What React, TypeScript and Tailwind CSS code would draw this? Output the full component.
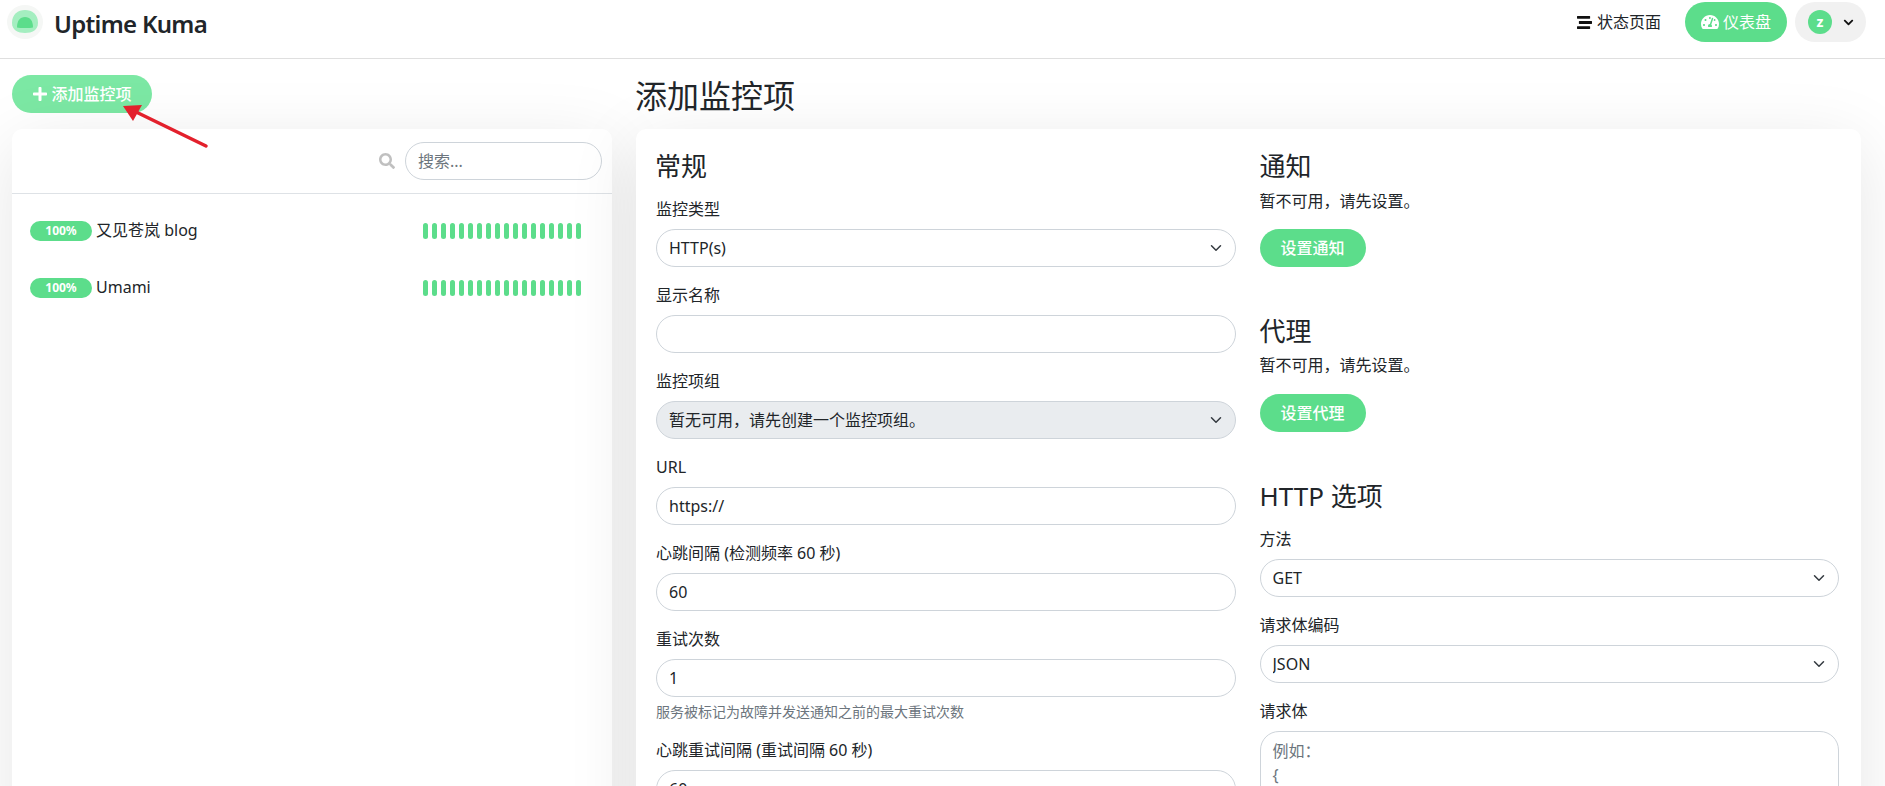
import React from "react";
import { FaPlus, FaSearch, FaStream, FaTachometerAlt, FaChevronDown } from "react-icons/fa";

const font = "font-['Noto_Sans','Noto_Sans_CJK_SC',sans-serif]";

function Field({ label, children, hint }: { label: string; children: React.ReactNode; hint?: string }) {
  return (
    <div className="mb-4">
      <label className="block h-6 mb-2 text-base leading-6 text-[#212529]">{label}</label>
      {children}
      {hint && <div className="mt-1 text-sm leading-[21px] text-[#6c757d]">{hint}</div>}
    </div>
  );
}

function TextInput({ value = "" }: { value?: string }) {
  return (
    <input
      readOnly
      value={value}
      className="block w-full h-[38px] px-3 rounded-full border border-[#ced4da] bg-white text-base text-[#212529] outline-none"
    />
  );
}

function SelectBox({ value, disabled }: { value: string; disabled?: boolean }) {
  return (
    <div className="relative">
      <select
        disabled={disabled}
        defaultValue={value}
        className={`block w-full h-[38px] pl-3 pr-9 rounded-full border border-[#ced4da] appearance-none text-base text-[#212529] opacity-100 outline-none ${disabled ? "bg-[#e9ecef]" : "bg-white"}`}
      >
        <option>{value}</option>
      </select>
      <svg className="absolute right-3 top-[13px] w-4 h-3 pointer-events-none" viewBox="0 0 16 16" fill="none">
        <path d="m2 5 6 6 6-6" stroke="#343a40" strokeWidth="2" strokeLinecap="round" strokeLinejoin="round" />
      </svg>
    </div>
  );
}

function GreenButton({ children }: { children: React.ReactNode }) {
  return (
    <button className="block h-[38px] w-[106px] rounded-full bg-[#5cdd8b] text-base font-medium text-white">{children}</button>
  );
}

function Monitor({ name }: { name: string }) {
  return (
    <div className="flex items-center h-[57px] pl-[18px] pr-[31px]">
      <span className="flex items-center justify-center w-[62px] h-5 rounded-full bg-[#5cdd8b] text-xs font-bold text-white">
        100%
      </span>
      <span className="ml-1 -mt-[2px] text-base text-[#212529]">{name}</span>
      <div className="ml-auto flex gap-1">
        {Array.from({ length: 18 }).map((_, i) => (
          <span key={i} className="block w-[5px] h-4 rounded-full bg-[#5cdd8b]" />
        ))}
      </div>
    </div>
  );
}

export default function App() {
  return (
    <div className={`relative h-screen overflow-hidden bg-white text-[#212529] ${font}`}>
      <header className="flex items-center h-[59px] border-b border-[#dfdfdf] bg-white pb-[16px] pl-[7px] pr-[19px]">
        <svg className="w-9 h-[34px] mt-[2px]" viewBox="0 0 36 34">
          <ellipse cx="18" cy="17" rx="18" ry="17" fill="#f5f7f5" />
          <path d="M5 18C5 9 11 5 18 5s13 4 13 13c0 7-6 10-13 10S5 25 5 18Z" fill="#a4eec0" />
          <path d="M10 22.500c0-7 3-10.500 8-10.500s8 3.500 8 10.500c-3 .8-13 .8-16 0Z" fill="#5cdd8b" />
        </svg>
        <span className="ml-[11px] mt-[5px] text-2xl font-semibold tracking-[-0.7px] text-[#212529]">Uptime Kuma</span>
        <div className="ml-auto flex items-center mt-[2px]">
          <FaStream className="w-[15px] h-[15px] text-[#111]" />
          <span className="ml-[5px] text-base">状态页面</span>
          <button className="ml-6 flex items-center justify-center gap-1 w-[102px] h-10 rounded-full bg-[#5cdd8b] text-base text-white">
            <FaTachometerAlt className="w-[18px] h-[18px]" />
            仪表盘
          </button>
          <div className="ml-2 flex items-center w-[71px] h-10 rounded-full bg-[#f1f1f1] pl-[13px]">
            <span className="flex items-center justify-center w-6 h-6 rounded-full bg-[#5cdd8b] text-sm font-bold text-white">
              z
            </span>
            <FaChevronDown className="ml-[11px] w-[11px] h-[11px] text-[#111]" />
          </div>
        </div>
      </header>

      <main className="grid grid-cols-[624px_1237px] gap-0 pt-4">
        <div className="pl-3 pr-3">
          <button className="flex items-center justify-center gap-[3px] w-[140px] h-[38px] rounded-full bg-[#7ce8a4] text-base font-medium text-white">
            <FaPlus className="w-4 h-4" />
            添加监控项
          </button>
          <div className="mt-4 h-[720px] rounded-[10px] bg-white shadow-[0_15px_70px_rgba(0,0,0,0.1)]">
            <div className="flex items-center justify-end h-[65px] pr-[10px] border-b border-[#dee2e6]">
              <FaSearch className="w-4 h-4 text-[#c0c0c0]" />
              <input
                readOnly
                placeholder="搜索..."
                className="ml-[10px] w-[197px] h-[38px] px-3 rounded-full border border-[#ced4da] bg-white text-base outline-none placeholder:text-[#6c757d]"
              />
            </div>
            <div className="pt-2">
              <Monitor name="又见苍岚 blog" />
              <Monitor name="Umami" />
            </div>
          </div>
        </div>

        <div className="ml-3">
          <h1 className="h-[38px] mt-[2px] mb-[14px] -ml-px text-[32px] leading-[38px] font-normal">添加监控项</h1>
          <div className="grid grid-cols-2 gap-6 h-[720px] rounded-[10px] bg-white pl-5 pr-[22px] pt-[23px] shadow-[0_15px_70px_rgba(0,0,0,0.1)]">
            <div>
              <h2 className="mb-4 -ml-px text-[26px] leading-[29px]">常规</h2>
              <Field label="监控类型"><SelectBox value="HTTP(s)" /></Field>
              <Field label="显示名称"><TextInput /></Field>
              <Field label="监控项组"><SelectBox disabled value="暂无可用，请先创建一个监控项组。" /></Field>
              <Field label="URL"><TextInput value="https://" /></Field>
              <Field label="心跳间隔 (检测频率 60 秒)"><TextInput value="60" /></Field>
              <Field label="重试次数" hint="服务被标记为故障并发送通知之前的最大重试次数"><TextInput value="1" /></Field>
              <Field label="心跳重试间隔 (重试间隔 60 秒)"><TextInput value="60" /></Field>
            </div>
            <div>
              <h2 className="mb-2 text-[26px] leading-[29px]">通知</h2>
              <p className="mb-4 text-base leading-6">暂不可用，请先设置。</p>
              <GreenButton>设置通知</GreenButton>
              <h2 className="mt-[50px] mb-[7px] text-[26px] leading-[29px]">代理</h2>
              <p className="mb-[17px] text-base leading-6">暂不可用，请先设置。</p>
              <GreenButton>设置代理</GreenButton>
              <h2 className="mt-[50px] mb-4 text-[26px] leading-[29px]">HTTP 选项</h2>
              <Field label="方法"><SelectBox value="GET" /></Field>
              <Field label="请求体编码"><SelectBox value="JSON" /></Field>
              <Field label="请求体">
                <textarea
                  readOnly
                  placeholder={"例如：\n{\n    \"key\": \"value\"\n}"}
                  className="block w-full h-[200px] px-3 py-[7px] rounded-[19px] border border-[#ced4da] bg-white text-base leading-6 outline-none resize-none placeholder:text-[#6c757d]"
                />
              </Field>
            </div>
          </div>
        </div>
      </main>

      <svg className="absolute left-[118px] top-[100px] w-[95px] h-[52px] pointer-events-none" viewBox="0 0 95 52" fill="none">
        <path d="M88 46 14 10" stroke="#e3202c" strokeWidth="3.500" strokeLinecap="round" />
        <path d="M5 6 24 5 15 21Z" fill="#e3202c" />
      </svg>
    </div>
  );
}
